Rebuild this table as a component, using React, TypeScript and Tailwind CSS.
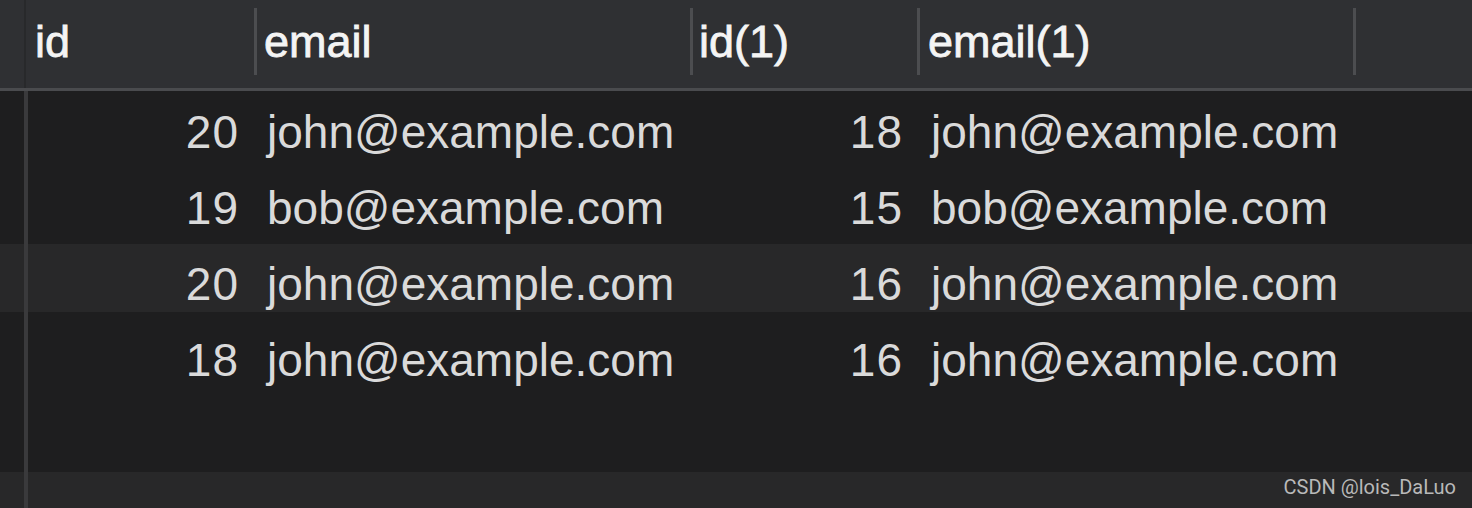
import React from "react";

const rows = [
  { h: "h-[77px]", pt: "pt-[18px]", bg: "bg-[#1e1e1f]", a: "20", b: "john@example.com", c: "18", d: "john@example.com" },
  { h: "h-[76px]", pt: "pt-[17px]", bg: "bg-[#1e1e1f]", a: "19", b: "bob@example.com", c: "15", d: "bob@example.com" },
  { h: "h-[68px]", pt: "pt-[17px]", bg: "bg-[#282829]", a: "20", b: "john@example.com", c: "16", d: "john@example.com" },
  { h: "h-[84px]", pt: "pt-[25px]", bg: "bg-[#1e1e1f]", a: "18", b: "john@example.com", c: "16", d: "john@example.com" },
];

function Sep() {
  return <div className="w-[3px] h-[67px] mt-[8px] bg-[#4c4d50] shrink-0" />;
}

export default function App() {
  return (
    <div
      className="w-[1472px] h-[508px] overflow-hidden flex flex-col bg-[#1e1e1f]"
      style={{ fontFamily: '"Liberation Sans", Arial, sans-serif' }}
    >
      {/* header */}
      <div className="h-[91px] shrink-0 flex bg-[#2f3033] border-b-[3px] border-[#4a4b4e] text-[#f4f4f4] text-[45px] font-normal leading-[45px] [-webkit-text-stroke:0.8px_#f4f4f4]">
        <div className="w-[24px] shrink-0" />
        <div className="w-[2px] shrink-0 bg-[#28292b]" />
        <div className="w-[228px] shrink-0 pl-[9px] pt-[19px]">id</div>
        <Sep />
        <div className="w-[433px] shrink-0 pl-[7px] pt-[19px]">email</div>
        <Sep />
        <div className="w-[224px] shrink-0 pl-[6px] pt-[19px]">id(1)</div>
        <Sep />
        <div className="w-[433px] shrink-0 pl-[8px] pt-[19px]">email(1)</div>
        <Sep />
        <div className="flex-1" />
      </div>

      {/* body */}
      <div className="flex-1 flex flex-col text-[46px] leading-[46px] text-[#dadada]">
        {rows.map((r, i) => (
          <div key={i} className={`flex shrink-0 ${r.h} ${r.bg}`}>
            <div className="w-[24px] shrink-0" />
            <div className="w-[4px] shrink-0 bg-[#3a3a3c]" />
            <div className={`w-[229px] shrink-0 text-right pr-[18px] tracking-[1px] ${r.pt}`}>{r.a}</div>
            <div className={`w-[436px] shrink-0 pl-[10px] ${r.pt}`}>{r.b}</div>
            <div className={`w-[227px] shrink-0 text-right pr-[17px] tracking-[1px] ${r.pt}`}>{r.c}</div>
            <div className={`w-[436px] shrink-0 pl-[11px] ${r.pt}`}>{r.d}</div>
            <div className="flex-1" />
          </div>
        ))}
        <div className="flex shrink-0 h-[76px] bg-[#1e1e1f]">
          <div className="w-[24px] shrink-0" />
          <div className="w-[4px] shrink-0 bg-[#3a3a3c]" />
          <div className="flex-1" />
        </div>
        <div className="flex flex-1 bg-[#282829]">
          <div className="w-[24px] shrink-0" />
          <div className="w-[4px] shrink-0 bg-[#3a3a3c]" />
          <div className="flex-1 flex justify-end items-start pr-[16px] pt-[3px]">
            <span
              className="text-[20px] leading-[24px] text-[#b9b9b9]"
              style={{ fontFamily: 'Roboto, "Liberation Sans", sans-serif' }}
            >
              CSDN @lois_DaLuo
            </span>
          </div>
        </div>
      </div>
    </div>
  );
}
